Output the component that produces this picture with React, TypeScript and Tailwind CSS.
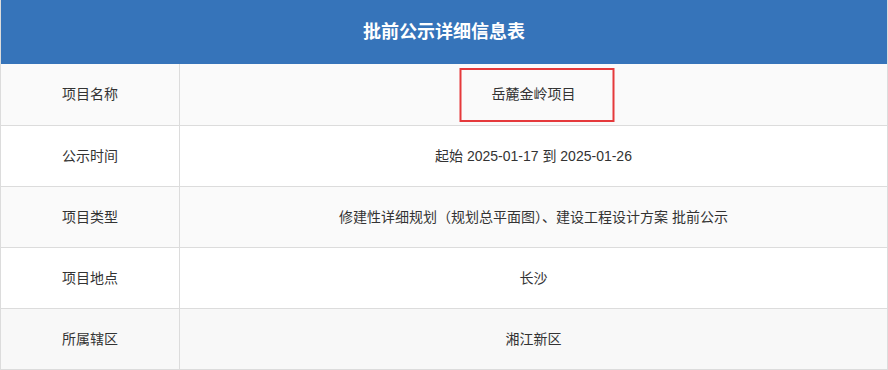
const rows = [
  { label: "项目名称", value: "岳麓金岭项目", marked: true, bg: "bg-[#fafafa]" },
  { label: "公示时间", value: "起始 2025-01-17 到 2025-01-26", bg: "bg-white" },
  {
    label: "项目类型",
    value: "修建性详细规划（规划总平面图）、建设工程设计方案 批前公示",
    bg: "bg-[#fafafa]",
  },
  { label: "项目地点", value: "长沙", bg: "bg-white" },
  { label: "所属辖区", value: "湘江新区", bg: "bg-[#f8f8f8]" },
]

export default function App() {
  return (
    <main
      className="w-[888px] h-[370px] bg-white overflow-hidden"
      style={{ fontFamily: '"Liberation Sans", "Noto Sans CJK SC", sans-serif' }}
    >
      <div className="border-l border-r border-b border-[#dcdcdc]">
        <div className="h-[64px] bg-[#3674ba] flex items-center justify-center">
          <h1 className="text-[18px] font-bold text-white">批前公示详细信息表</h1>
        </div>

        {rows.map((row, i) => (
          <div
            key={row.label}
            className={`flex h-[61px] ${row.bg} ${i > 0 ? "border-t border-[#dcdcdc]" : ""}`}
          >
            <div className="w-[179px] shrink-0 border-r border-[#dcdcdc] flex items-center justify-center text-[14px] text-[#333]">
              {row.label}
            </div>
            <div className="flex-1 relative flex items-center justify-center text-[14px] text-[#333]">
              {row.marked && (
                <span className="absolute top-[4px] left-1/2 -translate-x-1/2 ml-[3px] w-[155px] h-[54px] border-2 border-[#e5393b]" />
              )}
              <span className="relative">{row.value}</span>
            </div>
          </div>
        ))}
      </div>
    </main>
  )
}
